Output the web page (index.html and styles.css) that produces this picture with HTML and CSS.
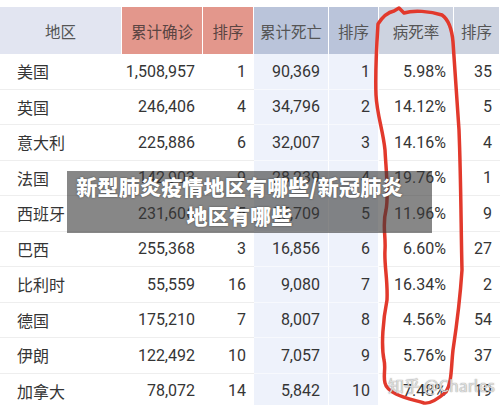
FILE: index.html
```html
<!DOCTYPE html>
<html lang="zh">
<head>
<meta charset="utf-8">
<link rel="stylesheet" href="styles.css">
</head>
<body>
<div class="page">
  <div class="table">
    <div class="row head">
      <div class="cell h-area">地区</div>
      <div class="cell h-case">累计确诊</div>
      <div class="cell h-case">排序</div>
      <div class="cell h-death">累计死亡</div>
      <div class="cell h-death">排序</div>
      <div class="cell h-rate">病死率</div>
      <div class="cell h-rate">排序</div>
    </div>
    <div class="row"><div class="cell name">美国</div><div class="cell num">1,508,957</div><div class="cell num">1</div><div class="cell num blue">90,369</div><div class="cell num blue">1</div><div class="cell num">5.98%</div><div class="cell num">35</div></div>
    <div class="row"><div class="cell name">英国</div><div class="cell num">246,406</div><div class="cell num">4</div><div class="cell num blue">34,796</div><div class="cell num blue">2</div><div class="cell num">14.12%</div><div class="cell num">5</div></div>
    <div class="row"><div class="cell name">意大利</div><div class="cell num">225,886</div><div class="cell num">6</div><div class="cell num blue">32,007</div><div class="cell num blue">3</div><div class="cell num">14.16%</div><div class="cell num">4</div></div>
    <div class="row"><div class="cell name">法国</div><div class="cell num">142,903</div><div class="cell num">9</div><div class="cell num blue">28,239</div><div class="cell num blue">4</div><div class="cell num">19.76%</div><div class="cell num">1</div></div>
    <div class="row"><div class="cell name">西班牙</div><div class="cell num">231,606</div><div class="cell num">5</div><div class="cell num blue">27,709</div><div class="cell num blue">5</div><div class="cell num">11.96%</div><div class="cell num">9</div></div>
    <div class="row"><div class="cell name">巴西</div><div class="cell num">255,368</div><div class="cell num">3</div><div class="cell num blue">16,856</div><div class="cell num blue">6</div><div class="cell num">6.60%</div><div class="cell num">27</div></div>
    <div class="row"><div class="cell name">比利时</div><div class="cell num">55,559</div><div class="cell num">16</div><div class="cell num blue">9,080</div><div class="cell num blue">7</div><div class="cell num">16.34%</div><div class="cell num">2</div></div>
    <div class="row"><div class="cell name">德国</div><div class="cell num">175,210</div><div class="cell num">7</div><div class="cell num blue">8,007</div><div class="cell num blue">8</div><div class="cell num">4.56%</div><div class="cell num">54</div></div>
    <div class="row"><div class="cell name">伊朗</div><div class="cell num">122,492</div><div class="cell num">10</div><div class="cell num blue">7,057</div><div class="cell num blue">9</div><div class="cell num">5.76%</div><div class="cell num">37</div></div>
    <div class="row"><div class="cell name">加拿大</div><div class="cell num">78,072</div><div class="cell num">14</div><div class="cell num blue">5,842</div><div class="cell num blue">10</div><div class="cell num">7.48%</div><div class="cell num">19</div></div>
  </div>

  <svg class="circle" width="500" height="405" viewBox="0 0 500 405">
    <path d="M378 24 C383 16 389 12 394 11 L399 8 L404 13 C413 10 430 11 442 15 C449 20 452 30 453 42 C455 70 457 100 459 130 C461 180 461 230 462 270 C460 300 456 330 453 350 C451 368 452 382 446 392 C438 399 430 404 424 403 C414 400 404 398 396 394 C390 391 386 388 385 383 C383 376 386 368 384 360 C381 345 383 320 387 300 C388 280 384 265 385 250 C386 235 382 225 386 210 C389 195 386 170 385 150 C383 130 377 115 376 95 C375 70 377 40 378 24 Z" />
  </svg>

  <div class="banner">新型肺炎疫情地区有哪些/新冠肺炎<br>地区有哪些</div>
  <div class="watermark">知乎 @Charles</div>
</div>
</body>
</html>
```

FILE: styles.css
```css
html, body {
  margin: 0;
  padding: 0;
  background: #ffffff;
}
body {
  width: 500px;
  height: 405px;
  overflow: hidden;
  font-family: Roboto, "Noto Sans CJK SC", sans-serif;
}
.page {
  position: relative;
  width: 500px;
  height: 405px;
  overflow: hidden;
  padding-top: 7px;
  box-sizing: border-box;
}
.table {
  display: flex;
  flex-direction: column;
}
.row {
  display: grid;
  grid-template-columns: 122px 81px 51px 75px 50px 75px 46px;
  height: 35.5px;
}
.row.head {
  height: 47px;
}
.cell {
  display: flex;
  align-items: center;
  box-sizing: border-box;
  border-bottom: 1px solid #eeeeee;
  font-size: 16px;
  color: #353535;
  white-space: nowrap;
}
.head .cell {
  justify-content: center;
  border-right: 1px solid #ffffff;
  border-bottom: none;
  font-size: 15.5px;
  color: #555555;
}
.h-area { background: #e2e5f1; }
.h-case { background: #e3978c; color: #5a4442 !important; }
.h-death { background: #bac4da; }
.h-rate { background: #cdd3e0; }
.name {
  padding-left: 17px;
}
.num {
  justify-content: flex-end;
  padding-right: 8px;
}
.blue {
  background: #eef2fb;
  border-bottom-color: #f7f9fd;
  border-right: 1px solid #ffffff;
}
.circle {
  position: absolute;
  left: 0;
  top: 0;
}
.circle path {
  fill: none;
  stroke: #e2392c;
  stroke-width: 3.5;
  stroke-linejoin: round;
  stroke-linecap: round;
}
.banner {
  position: absolute;
  left: 67px;
  top: 171px;
  width: 365px;
  height: 62px;
  box-sizing: border-box;
  padding-top: 1px;
  padding-right: 20px;
  background: rgba(55, 55, 55, 0.6);
  color: #ffffff;
  font-family: "Noto Sans CJK SC", sans-serif;
  font-weight: 900;
  font-size: 21px;
  line-height: 29px;
  text-align: center;
  letter-spacing: 0.2px;
  text-shadow: 0 0 2px rgba(0, 0, 0, 0.5);
}
.watermark {
  position: absolute;
  left: 388px;
  top: 373px;
  font-family: "Noto Sans CJK SC", sans-serif;
  font-size: 16px;
  color: rgba(235, 235, 235, 0.85);
  text-shadow: 0 0 1px rgba(120, 120, 120, 0.7), 0 0 1px rgba(120, 120, 120, 0.5);
  white-space: nowrap;
}
```
